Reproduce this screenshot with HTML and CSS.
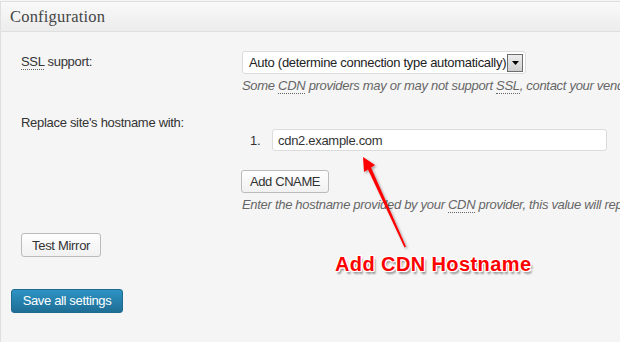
FILE: index.html
```html
<!DOCTYPE html>
<html>
<head>
<meta charset="utf-8">
<link rel="stylesheet" href="styles.css">
</head>
<body>
<div class="postbox">
  <h3 class="hndle">Configuration</h3>
  <div class="inside">
    <div class="row row-ssl">
      <div class="label"><abbr>SSL</abbr> support:</div>
      <div class="field">
        <div class="select">
          <span class="select-text">Auto (determine connection type automatically)</span>
          <span class="select-btn"><svg width="7" height="4" viewBox="0 0 7 4"><path d="M0 0h7L3.5 4z" fill="#000"/></svg></span>
        </div>
        <p class="desc">Some <abbr>CDN</abbr> providers may or may not support <abbr>SSL</abbr>, contact your vendor for more information.</p>
      </div>
    </div>
    <div class="row row-host">
      <div class="label">Replace site's hostname with:</div>
      <div class="field">
        <ol class="cnames">
          <li><span class="num">1.</span><span class="input">cdn2.example.com</span></li>
        </ol>
        <button class="btn btn-add">Add CNAME</button>
        <p class="desc">Enter the hostname provided by your <abbr>CDN</abbr> provider, this value will replace your site's hostname in the HTML.</p>
      </div>
    </div>
    <button class="btn btn-test">Test Mirror</button>
    <button class="btn-primary">Save all settings</button>
  </div>
  <svg class="arrow" width="60" height="100" viewBox="0 0 60 100">
    <defs>
      <filter id="sh" x="-50%" y="-50%" width="200%" height="200%">
        <feDropShadow dx="1.5" dy="1.5" stdDeviation="1.2" flood-color="#000" flood-opacity="0.35"/>
      </filter>
    </defs>
    <path d="M3 2 L15 10 L11 12.6 L46 91.5 L44.5 92.5 L8 14.5 L4 17 Z" fill="#ff0000" filter="url(#sh)"/>
  </svg>
  <div class="callout">Add CDN Hostname</div>
</div>
</body>
</html>
```
FILE: styles.css
```css
html, body {
  margin: 0;
  padding: 0;
  background: #f5f5f5;
}
body {
  width: 620px;
  height: 342px;
  overflow: hidden;
  font-family: "Liberation Sans", Arial, sans-serif;
  font-size: 13px;
  letter-spacing: -0.3px;
  color: #333;
}
.postbox {
  position: relative;
  margin-top: 1px;
  border-left: 1px solid #dfdfdf;
  border-top: 1px solid #dfdfdf;
  background: #f5f5f5;
  height: 340px;
  overflow: hidden;
}
.hndle {
  margin: 0;
  height: 30px;
  box-sizing: border-box;
  padding: 5px 0 0 9px;
  font-family: "Liberation Serif", Georgia, serif;
  font-weight: normal;
  font-size: 16.5px;
  letter-spacing: 0.2px;
  color: #464646;
  background: linear-gradient(#f9f9f9, #ececec);
  border-bottom: 1px solid #dfdfdf;
}
.inside {
  padding: 19px 0 0 20px;
}
.row {
  display: flex;
}
.label {
  width: 221px;
  flex: none;
  padding-top: 3px;
}
abbr {
  text-decoration: none;
  border-bottom: 1px dotted #666;
}
.select {
  width: 284px;
  height: 23px;
  box-sizing: border-box;
  background: #fff;
  border: 1px solid #dcdcdc;
  border-radius: 3px;
  display: flex;
  align-items: center;
  padding-left: 6px;
  color: #222;
  white-space: nowrap;
}
.select-text {
  flex: 1;
}
.select-btn {
  width: 14px;
  height: 16px;
  margin-right: 2px;
  border: 1px solid #6d6d6d;
  background: linear-gradient(#eee, #cfcfcf);
  display: flex;
  align-items: center;
  justify-content: center;
}
.desc {
  margin: 4px 0 0 0;
  font-style: italic;
  color: #666;
  white-space: nowrap;
}
.row-host {
  margin-top: 20px;
}
.row-host .label {
  padding-top: 2px;
}
.cnames {
  list-style: none;
  margin: 16px 0 0 0;
  padding: 0;
}
.cnames li {
  display: flex;
  align-items: center;
}
.num {
  width: 22px;
  padding-left: 8px;
  color: #333;
}
.input {
  width: 335px;
  height: 22px;
  box-sizing: border-box;
  background: #fff;
  border: 1px solid #dcdcdc;
  border-radius: 3px;
  padding: 3px 0 0 5px;
  color: #333;
}
.btn {
  display: block;
  margin: 19px 0 0 -1px;
  height: 23px;
  padding: 0 10px;
  font-family: "Liberation Sans", Arial, sans-serif;
  font-size: 13px;
  letter-spacing: -0.3px;
  color: #333;
  background: linear-gradient(#fefefe, #f1f1f1);
  border: 1px solid #bbb;
  border-radius: 3px;
}
.btn-add {
  padding: 0 8px;
  letter-spacing: -0.4px;
}
.btn-test {
  margin: 21px 0 0 0;
  height: 24px;
  padding: 0 10px;
}
.btn-primary {
  display: block;
  margin: 32px 0 0 -10px;
  height: 24px;
  width: 112px;
  padding: 0 0 1px;
  font-family: "Liberation Sans", Arial, sans-serif;
  font-size: 13px;
  letter-spacing: -0.35px;
  color: #fff;
  background: linear-gradient(#2d93c4, #1f6e95);
  border: 1px solid #1f6a8f;
  border-radius: 3px;
}
.arrow {
  position: absolute;
  left: 359px;
  top: 153px;
}
.callout {
  position: absolute;
  left: 334px;
  top: 251px;
  font-family: "Liberation Sans", Arial, sans-serif;
  font-weight: bold;
  font-size: 20px;
  letter-spacing: 0.4px;
  color: #ff0000;
  text-shadow: -1px -1px 0 #fff, 1px -1px 0 #fff, -1px 1px 0 #fff, 1px 1px 0 #fff, 0 -1px 0 #fff, 0 1px 0 #fff, -1px 0 0 #fff, 1px 0 0 #fff, 2px 3px 2px rgba(0,0,0,0.4);
}
```
